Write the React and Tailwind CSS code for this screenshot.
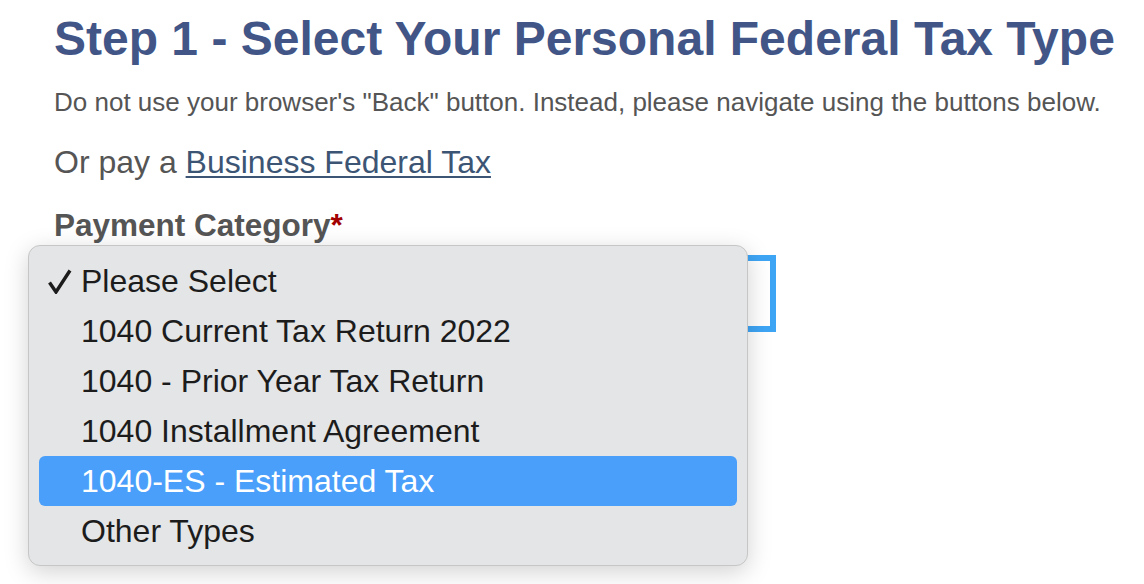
import React from "react";

const options = [
  "Please Select",
  "1040 Current Tax Return 2022",
  "1040 - Prior Year Tax Return",
  "1040 Installment Agreement",
  "1040-ES - Estimated Tax",
  "Other Types",
];

function Check() {
  return (
    <svg width="24" height="25" viewBox="0 0 24 25" className="absolute left-[9px] top-[13px]">
      <path d="M1.5 13.5 L8 23 L22 1.5" fill="none" stroke="#1c1c1c" strokeWidth="3.4" strokeLinejoin="miter" />
    </svg>
  );
}

export default function App() {
  const selected = 0;
  const hovered = 4;

  return (
    <div className="min-h-screen bg-white pt-[15px] pl-[54px] font-['Liberation_Sans',Arial,sans-serif] text-[#555]">
      <h1 className="text-[48px] leading-none font-bold text-[#425587] whitespace-nowrap">
        Step 1 - Select Your Personal Federal Tax Type
      </h1>
      <p className="mt-[26px] text-[26px] leading-none whitespace-nowrap">
        Do not use your browser's "Back" button. Instead, please navigate using the buttons below.
      </p>
      <p className="mt-[31px] text-[32px] leading-none whitespace-nowrap">
        Or pay a{" "}
        <a href="#" className="text-[#3d5574] underline decoration-2 underline-offset-[3px]">
          Business Federal Tax
        </a>
      </p>
      <div className="mt-[32px] text-[31.5px] leading-none font-bold">
        Payment Category<span className="text-[#a30000]">*</span>
      </div>

      {/* select with open menu */}
      <div className="relative mt-[13px] w-[722px]">
        <div className="h-[77px] w-full border-[6px] border-[#3ea5f5] bg-white" />

        <div className="absolute left-[-26px] top-[-10px] w-[720px] rounded-[12px] border border-[#c6c6c6] bg-[#e4e5e6] px-[10px] pt-[10px] pb-[9px] shadow-[0_6px_24px_rgba(0,0,0,0.18)]">
          {options.map((opt, i) => (
            <div
              key={opt}
              className={`relative h-[50px] rounded-[6px] pl-[42px] text-[32px] leading-[50px] whitespace-nowrap ${
                i === hovered ? "bg-[#4a9ffa] text-white" : "text-[#1c1c1c]"
              }`}
            >
              {i === selected && <Check />}
              {opt}
            </div>
          ))}
        </div>
      </div>
    </div>
  );
}
